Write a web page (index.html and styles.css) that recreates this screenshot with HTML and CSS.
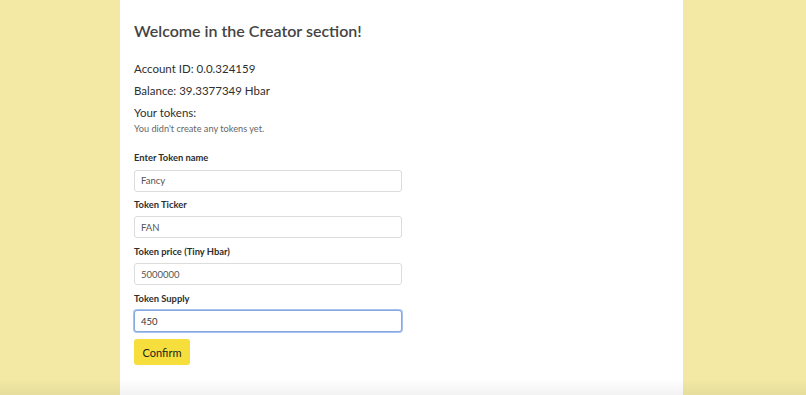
FILE: index.html
```html
<!DOCTYPE html>
<html lang="en">
<head>
    <meta charset="UTF-8">
    <meta name="viewport" content="width=device-width, initial-scale=1.0">
    <title>Creator</title>
    <link rel="stylesheet" href="styles.css">
</head>
<body>
    <div class="page">
        <div class="creator-container">
            <h3>Welcome in the Creator section!</h3>
            <p class="info">Account ID: 0.0.324159</p>
            <p class="info">Balance: 39.3377349 Hbar</p>
            <p class="info">Your tokens:</p>
            <p class="muted">You didn't create any tokens yet.</p>

            <form id="token-form">
                <div class="form-group">
                    <label for="token-name">Enter Token name</label>
                    <input type="text" id="token-name" value="Fancy">
                </div>
                <div class="form-group">
                    <label for="token-ticker">Token Ticker</label>
                    <input type="text" id="token-ticker" value="FAN">
                </div>
                <div class="form-group">
                    <label for="token-price">Token price (Tiny Hbar)</label>
                    <input type="text" id="token-price" value="5000000">
                </div>
                <div class="form-group">
                    <label for="token-supply">Token Supply</label>
                    <input type="text" id="token-supply" class="focused" value="450">
                </div>
                <button type="submit" class="button">Confirm</button>
            </form>
        </div>
    </div>
    <div class="bottom-shade"></div>
</body>
</html>
```

FILE: styles.css
```css
/* General Body Styles */
body {
    font-family: 'Lato', 'Noto Sans', sans-serif;
    background-color: #f3e9a4;
    margin: 0;
    padding: 0;
    height: 395px;
    overflow: hidden;
    position: relative;
}

.page {
    display: flex;
    height: 100%;
    padding-left: 120px;
}

/* White creator panel */
.creator-container {
    background-color: #ffffff;
    width: 563px;
    padding: 20px 14px 0;
    box-sizing: border-box;
    color: #2f2f2f;
}

h3 {
    font-size: 16px;
    line-height: 22px;
    font-weight: 600;
    margin: 0 0 20px;
    color: #444;
}

.info {
    font-size: 11.5px;
    line-height: 14px;
    margin: 0 0 8px;
}

.muted {
    font-size: 9.2px;
    line-height: 12px;
    color: #666;
    margin: -5px 0 17px;
}

/* Form Group Styles */
.form-group {
    margin-bottom: 7.3px;
}

.form-group label {
    display: block;
    font-size: 9.4px;
    line-height: 12px;
    font-weight: 700;
    color: #2e2e2e;
    margin-bottom: 5.6px;
}

.form-group input {
    display: block;
    width: 268px;
    height: 22px;
    box-sizing: border-box;
    padding: 0 6px;
    border: 1px solid #dcdcdc;
    border-radius: 3px;
    font-family: inherit;
    font-size: 9.5px;
    color: #555;
}

.form-group input.focused {
    border-color: #86a8e0;
    box-shadow: 0 0 0 1px #a9c2ec;
    color: #333;
    outline: none;
}

/* Button Styles */
.button {
    margin-top: -0.5px;
    background-color: #f6df3c;
    color: #222;
    width: 56px;
    height: 26px;
    padding: 0;
    font-family: inherit;
    font-size: 11px;
    border: none;
    border-radius: 3px;
}

.bottom-shade {
    position: absolute;
    left: 0;
    right: 0;
    bottom: 0;
    height: 16px;
    background: linear-gradient(to bottom, rgba(0, 0, 0, 0), rgba(0, 0, 0, 0.05));
}
```
